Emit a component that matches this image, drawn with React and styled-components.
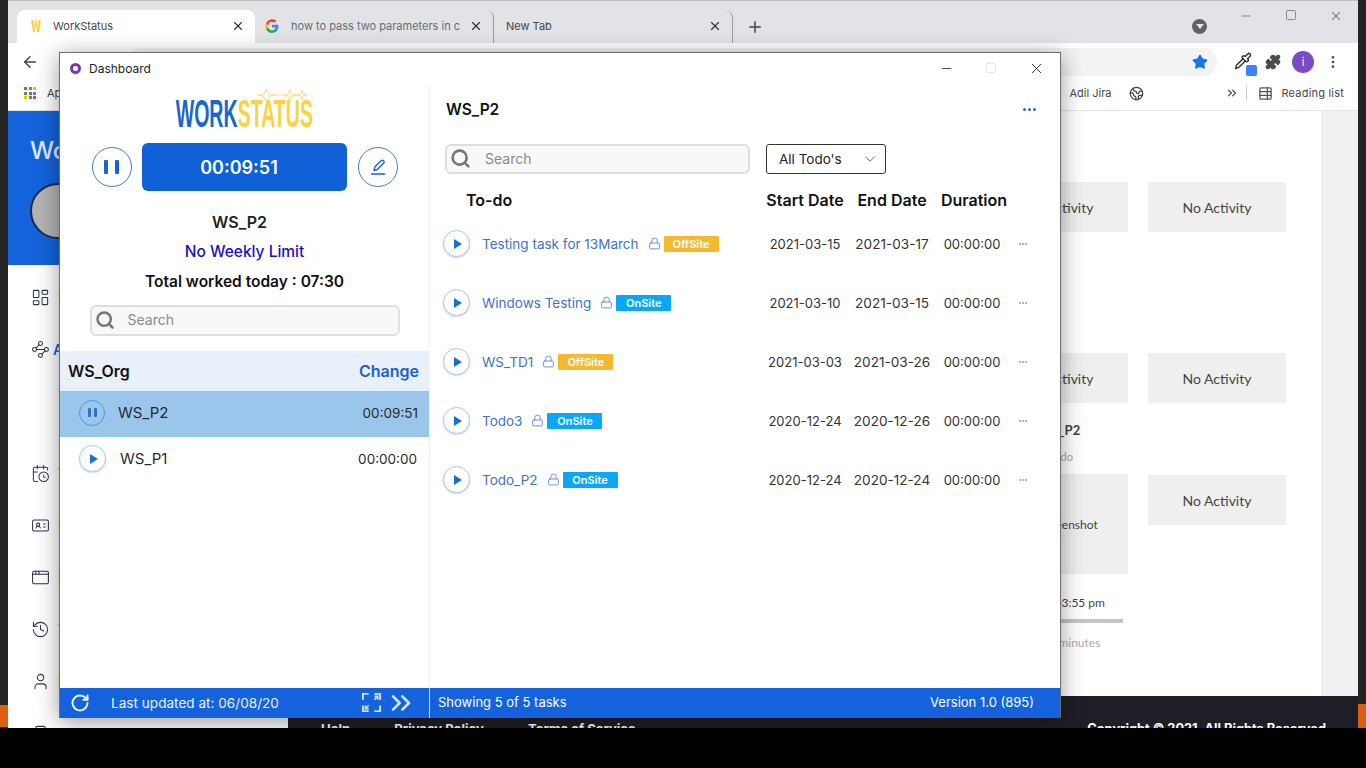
import React from "react";
import styled, { createGlobalStyle } from "styled-components";
import {
  ArrowLeft, AppWindow, Building2, CalendarClock, ChevronDown, ChevronsRight, Earth, History, IdCard,
  LayoutDashboard, Lock, Minus, MoreVertical, Pipette, Plus, Puzzle, RotateCw,
  Search, Square, Star, TableProperties, User, Waypoints, X,
} from "lucide-react";

const Global = createGlobalStyle`
  html, body { margin: 0; padding: 0; background: #000; }
  * { box-sizing: border-box; }
`;

const Screen = styled.div`
  position: relative;
  width: 1366px;
  height: 768px;
  overflow: hidden;
  background: #000;
  font-family: Inter, "Liberation Sans", sans-serif;
`;

const Desktop = styled.div`
  display: flex;
  height: 728px;
`;

const Strip = styled.div`
  width: 8px;
  background: #242424;
  display: flex;
  flex-direction: column;
  justify-content: flex-end;
`;

const OrangeEnd = styled.div`
  height: ${(p) => p.$h}px;
  margin-bottom: ${(p) => p.$mb}px;
  background: #d9600f;
`;

const Browser = styled.div`
  flex: 1;
  display: flex;
  flex-direction: column;
  background: #fff;
  min-width: 0;
`;

const TabStrip = styled.div`
  height: 43px;
  background: #e1e3e6;
  border-top: 1px solid #bdbdbd;
  display: flex;
  align-items: flex-end;
  padding-left: 9px;
  position: relative;
`;

const Tab = styled.div`
  width: ${(p) => p.$w}px;
  height: 33px;
  display: flex;
  align-items: center;
  padding: 0 10px 2px ${(p) => p.$pl}px;
  font-size: 11px;
  color: #45474a;
  background: ${(p) => (p.$active ? "#fff" : "transparent")};
  border-radius: 8px 8px 0 0;
  border-right: ${(p) => (p.$divided ? "1px solid #9a9da1" : "0")};
  background-clip: padding-box;
`;

const TabTitle = styled.span`
  flex: 1;
  white-space: nowrap;
  overflow: hidden;
  margin-left: ${(p) => p.$ml}px;
  color: ${(p) => p.$c || "#45474a"};
`;

const NewTab = styled.div`
  margin-left: 13px;
  height: 33px;
  display: flex;
  align-items: center;
  color: #45474a;
`;

const CaretBadge = styled.div`
  position: absolute;
  left: 1184px;
  top: 18px;
  width: 15px;
  height: 15px;
  border-radius: 50%;
  background: #5f6368;
  display: flex;
  align-items: center;
  justify-content: center;
`;

const CaretTip = styled.div`
  width: 0;
  height: 0;
  border-left: 4px solid transparent;
  border-right: 4px solid transparent;
  border-top: 5px solid #e1e3e6;
`;

const WinControls = styled.div`
  position: absolute;
  right: 15px;
  top: 8px;
  display: flex;
  gap: 32px;
  color: #8a8a8a;
`;

const Toolbar = styled.div`
  height: 37px;
  display: flex;
  align-items: center;
  padding-left: 13px;
  color: #5f6368;
`;

const Omnibox = styled.div`
  margin-left: 88px;
  width: 1090px;
  height: 28px;
  border-radius: 14px;
  background: #f1f3f4;
  display: flex;
  align-items: center;
  justify-content: flex-end;
  padding-right: 9px;
`;

const ToolIcons = styled.div`
  margin-left: 17px;
  display: flex;
  align-items: center;
  gap: 11px;
  color: #4a4d50;
`;

const Eyedropper = styled.div`
  position: relative;
  width: 20px;
  height: 20px;
  color: #333;
`;

const EyedropperChip = styled.div`
  position: absolute;
  right: -3px;
  bottom: -4px;
  width: 11px;
  height: 11px;
  border-radius: 2px;
  background: #3b82f6;
`;

const Avatar = styled.div`
  width: 22px;
  height: 22px;
  border-radius: 50%;
  background: #7b4bc4;
  color: #fff;
  font-size: 11px;
  display: flex;
  align-items: center;
  justify-content: center;
`;

const Bookmarks = styled.div`
  height: 31px;
  display: flex;
  align-items: center;
  padding: 0 0 4px 16px;
  font-size: 11px;
  color: #45474a;
  border-bottom: 1px solid #e4e4e4;
`;

const AppsGrid = styled.div`
  display: grid;
  grid-template-columns: repeat(3, 3px);
  gap: 1.5px;
  margin-right: 11px;
`;

const AppsDot = styled.div`
  width: 3px;
  height: 3px;
  background: ${(p) => p.$c};
`;

const BookmarkRight = styled.div`
  margin-left: auto;
  display: flex;
  align-items: center;
  padding-right: 14px;
`;

const BookmarkLabel = styled.span`
  margin: 0 ${(p) => p.$mr || 0}px 0 ${(p) => p.$ml || 0}px;
  letter-spacing: ${(p) => p.$ls || 0}px;
`;

const OverflowMark = styled.span`
  display: flex;
  margin-left: 81px;
`;

const Divider = styled.div`
  width: 1px;
  height: 16px;
  background: #cfcfcf;
  margin: 0 11px 0 7px;
`;

const SiteBody = styled.div`
  flex: 1;
  display: flex;
  min-height: 0;
`;

const Sidebar = styled.div`
  width: 280px;
  background: #fff;
  overflow: hidden;
`;

const SideHead = styled.div`
  height: 154px;
  background: #1463dc;
  padding: 25px 0 0 22px;
  color: #dfeaff;
  font-size: 24px;
  font-weight: 500;
`;

const Portrait = styled.div`
  width: 56px;
  height: 56px;
  margin-top: 18px;
  border-radius: 50%;
  background: #b4b4b4;
  border: 2px solid #1c2c48;
`;

const Nav = styled.div`
  padding-top: 6px;
`;

const NavItem = styled.div`
  height: 52px;
  display: flex;
  align-items: center;
  padding-left: 23px;
  gap: ${(p) => (p.$on ? 3 : 8)}px;
  font-size: 14px;
  font-weight: ${(p) => (p.$on ? 600 : 400)};
  color: ${(p) => (p.$on ? "#1463dc" : "#333")};
  margin-top: ${(p) => p.$mt || 0}px;
  svg { color: #2d3550; }
`;

const SiteMain = styled.div`
  flex: 1;
  display: flex;
  flex-direction: column;
  min-width: 0;
`;

const SiteTop = styled.div`
  flex: 1;
  display: flex;
  min-height: 0;
`;

const Board = styled.div`
  flex: 1;
  display: flex;
  justify-content: flex-end;
  gap: 20px;
  padding: 71px 36px 0 0;
`;

const BoardCol = styled.div`
  width: 138px;
  display: flex;
  flex-direction: column;
  align-items: center;
`;

const Card = styled.div`
  width: 100%;
  height: ${(p) => p.$h || 50}px;
  margin-top: ${(p) => p.$mt || 0}px;
  background: #efefef;
  display: flex;
  align-items: center;
  justify-content: center;
  font-size: ${(p) => p.$fs || 14}px;
  color: #444;
  font-family: Lato, sans-serif;
`;

const BoardNote = styled.div`
  margin-top: ${(p) => p.$mt}px;
  font-size: ${(p) => p.$fs}px;
  font-weight: ${(p) => p.$fw || 400};
  color: ${(p) => p.$c};
  font-family: Lato, sans-serif;
  white-space: nowrap;
`;

const BoardBar = styled.div`
  width: 133px;
  height: 4px;
  margin-top: 9px;
  align-self: flex-start;
  background: #c4c4c4;
`;

const SiteScroll = styled.div`
  width: 36px;
  background: #f1f1f3;
  border-left: 1px solid #e8e8ea;
`;

const SiteFooter = styled.div`
  height: 32px;
  background: #1f1f27;
  display: flex;
  justify-content: space-between;
  padding: 25px 32px 0 33px;
  font-size: 13px;
  font-weight: 700;
  color: #fff;
  overflow: hidden;
  white-space: nowrap;
`;

const FooterLinks = styled.div`
  display: flex;
  gap: 19px;
`;

const Copyright = styled.span`
  font-size: 12.8px;
`;

const Window = styled.div`
  position: absolute;
  left: 59px;
  top: 52px;
  width: 1002px;
  height: 666px;
  display: flex;
  flex-direction: column;
  background: #fff;
  border: 1px solid #6e6e6e;
  border-bottom: 0;
  box-shadow: 0 4px 22px rgba(0, 0, 0, 0.4);
`;

const TitleBar = styled.div`
  height: 32px;
  flex: none;
  display: flex;
  align-items: center;
  padding: 0 0 2px 10px;
  font-size: 12px;
  color: #222;
`;

const TitleGlyph = styled.div`
  width: 11px;
  height: 11px;
  margin-right: 8px;
  border-radius: 50%;
  border: 3px solid #7a3aa8;
`;

const TitleButtons = styled.div`
  margin-left: auto;
  display: flex;
  align-items: center;
  padding-right: 15px;
  gap: 31px;
  color: #222;
`;

const Panes = styled.div`
  flex: 1;
  display: flex;
  min-height: 0;
`;

const LeftPane = styled.div`
  width: 370px;
  flex: none;
  border-right: 1px solid #f3f3f3;
  display: flex;
  flex-direction: column;
  align-items: center;
`;

const LogoBox = styled.div`
  position: relative;
  height: 58px;
  width: 100%;
  display: flex;
  justify-content: center;
  padding-top: 10px;
`;

const LogoText = styled.div`
  font-family: "Liberation Sans Narrow", "Liberation Sans", sans-serif;
  font-weight: 700;
  font-size: 38px;
  line-height: 38px;
  white-space: nowrap;
  transform: scaleX(0.515);
  color: #1a66cc;
`;

const LogoGold = styled.span`
  color: #fbd23f;
`;

const LogoStars = styled.svg`
  position: absolute;
  left: 194px;
  top: 2px;
`;

const TimerRow = styled.div`
  display: flex;
  align-items: center;
  height: 48px;
  gap: 10px;
`;

const RoundButton = styled.div`
  width: 40px;
  height: 40px;
  margin-left: ${(p) => p.$ml || 0}px;
  border-radius: 50%;
  border: 1px solid #3f7fd0;
  color: #1463dc;
  display: flex;
  align-items: center;
  justify-content: center;
  gap: 7px;
`;

const PauseBar = styled.div`
  width: ${(p) => p.$w}px;
  height: ${(p) => p.$h}px;
  border-radius: 1px;
  background: ${(p) => p.$c || "#1463dc"};
`;

const TimerButton = styled.div`
  width: 205px;
  height: 48px;
  padding-right: 10px;
  border-radius: 6px;
  background: #1061d8;
  color: #fff;
  font-size: 18px;
  font-weight: 600;
  display: flex;
  align-items: center;
  justify-content: center;
`;

const InfoLine = styled.div`
  height: ${(p) => p.$h || 30}px;
  line-height: ${(p) => p.$h || 30}px;
  margin-top: ${(p) => p.$mt || 0}px;
  padding-right: ${(p) => p.$pr || 0}px;
  font-size: ${(p) => p.$fs || 15.5}px;
  font-weight: ${(p) => p.$fw};
  color: ${(p) => p.$c};
`;

const SearchBox = styled.div`
  width: ${(p) => p.$w}px;
  height: ${(p) => p.$h}px;
  margin-top: ${(p) => p.$mt || 0}px;
  border: 2px solid #dedede;
  border-radius: 6px;
  background: #f8f8f8;
  display: flex;
  align-items: center;
  padding: 0 0 2px 3px;
  gap: ${(p) => p.$gap || 13}px;
  font-size: 14px;
  color: #8a8a8a;
  svg { color: #777; }
`;

const OrgHead = styled.div`
  width: 100%;
  height: 40px;
  margin-top: 15px;
  background: #e8f0fc;
  display: flex;
  align-items: center;
  justify-content: space-between;
  padding: 0 10px 0 8px;
  font-size: 16px;
  font-weight: 600;
  color: #111;
`;

const ChangeLink = styled.span`
  color: #1a62c8;
  font-size: 16px;
`;

const ProjectRow = styled.div`
  width: 100%;
  height: ${(p) => (p.$active ? 46 : 45)}px;
  background: ${(p) => (p.$active ? "#9bc6ec" : "#fff")};
  display: flex;
  align-items: center;
  padding: 0 ${(p) => (p.$active ? 11 : 12)}px ${(p) => (p.$active ? 3 : 2)}px 19px;
  gap: ${(p) => (p.$active ? 13 : 14)}px;
  font-size: 15px;
  color: #2a2a2a;
`;

const ProjectTime = styled.span`
  margin-left: auto;
  font-size: 13.5px;
`;

const MiniRound = styled.div`
  width: ${(p) => p.$d}px;
  height: ${(p) => p.$d}px;
  flex: none;
  border-radius: 50%;
  border: 1px solid ${(p) => (p.$paused ? "#5a94cf" : "#a9c8ea")};
  background: ${(p) => (p.$paused ? "transparent" : "#fff")};
  box-shadow: ${(p) => (p.$paused ? "none" : "0 1px 2px rgba(90,120,170,.3)")};
  display: flex;
  align-items: center;
  justify-content: center;
  gap: 3px;
`;

const PlayTip = styled.div`
  width: 0;
  height: 0;
  margin-left: 2px;
  border-top: 5px solid transparent;
  border-bottom: 5px solid transparent;
  border-left: 8px solid #1a70d2;
`;

const RightPane = styled.div`
  flex: 1;
  display: flex;
  flex-direction: column;
  padding-left: 13px;
  min-width: 0;
`;

const PaneHead = styled.div`
  height: 48px;
  display: flex;
  align-items: center;
  justify-content: space-between;
  padding: 0 24px 0 3px;
  font-size: 15.5px;
  font-weight: 600;
  color: #111;
`;

const Dots = styled.div`
  display: flex;
  gap: 2px;
`;

const Dot = styled.div`
  width: ${(p) => p.$s}px;
  height: ${(p) => p.$s}px;
  border-radius: 50%;
  background: ${(p) => p.$c};
`;

const FilterRow = styled.div`
  margin: 11px 0 0 2px;
  display: flex;
  gap: 16px;
`;

const FilterSelect = styled.div`
  width: 120px;
  height: 30px;
  border: 1px solid #333;
  border-radius: 3px;
  display: flex;
  align-items: center;
  justify-content: space-between;
  padding: 0 6px 1px 12px;
  font-size: 13.5px;
  color: #222;
  svg { color: #555; }
`;

const tableCols = "319px 86px 88px 72px 30px";

const TableHead = styled.div`
  margin-top: 11px;
  height: 29px;
  display: grid;
  grid-template-columns: ${tableCols};
  align-items: center;
  font-size: 16px;
  font-weight: 600;
  color: #111;
`;

const HeadCell = styled.div`
  padding-left: ${(p) => p.$pl || 0}px;
  text-align: center;
  white-space: nowrap;
`;

const HeadTodo = styled.div`
  padding-left: 23px;
`;

const TaskRow = styled.div`
  height: 59px;
  display: grid;
  grid-template-columns: ${tableCols};
  align-items: center;
  font-size: 13px;
  color: #333;
`;

const TaskMain = styled.div`
  display: flex;
  align-items: center;
`;

const TaskName = styled.span`
  margin-left: 12px;
  margin-right: 9px;
  color: #3d74c4;
  font-size: 13.5px;
  white-space: nowrap;
`;

const LockWrap = styled.span`
  display: flex;
  color: #6c8fdc;
  margin-right: 3px;
`;

const Badge = styled.span`
  width: 55px;
  height: 16px;
  border-radius: 1px;
  background: ${(p) => (p.$kind === "OffSite" ? "#f5b92f" : "#0ba6f6")};
  color: #fff;
  font-size: 11px;
  font-weight: 600;
  display: flex;
  align-items: center;
  justify-content: center;
`;

const TaskCell = styled.div`
  text-align: center;
  white-space: nowrap;
  font-size: ${(p) => p.$fs || 13}px;
`;

const TaskDots = styled.div`
  display: flex;
  justify-content: center;
  gap: 1px;
`;

const StatusBar = styled.div`
  height: 30px;
  flex: none;
  display: flex;
  background: #1463dc;
  color: #fff;
`;

const StatusLeft = styled.div`
  width: 370px;
  flex: none;
  border-right: 1px solid #d8e6fa;
  display: flex;
  align-items: center;
  padding: 0 0 1px 10px;
  font-size: 13.6px;
  color: #eaf2ff;
`;

const StatusText = styled.span`
  margin-left: 21px;
`;

const StatusIcons = styled.div`
  margin-left: auto;
  display: flex;
  align-items: center;
  gap: 2px;
  padding-right: 12px;
  color: #cfe2ff;
`;

const StatusRight = styled.div`
  flex: 1;
  display: flex;
  align-items: center;
  justify-content: space-between;
  padding: 0 26px 2px 8px;
  font-size: 13px;
`;

const appColors = ["#ea4335", "#4285f4", "#fbbc05", "#34a853", "#ea4335", "#4285f4", "#fbbc05", "#34a853", "#ea4335"];

const tasks = [
  { name: "Testing task for 13March", kind: "OffSite", start: "2021-03-15", end: "2021-03-17" },
  { name: "Windows Testing", kind: "OnSite", start: "2021-03-10", end: "2021-03-15" },
  { name: "WS_TD1", kind: "OffSite", start: "2021-03-03", end: "2021-03-26" },
  { name: "Todo3", kind: "OnSite", start: "2020-12-24", end: "2020-12-26" },
  { name: "Todo_P2", kind: "OnSite", start: "2020-12-24", end: "2020-12-24" },
];

const navItems = [
  { Icon: LayoutDashboard, label: "Dashboard" },
  { Icon: Waypoints, label: "Activity", on: true },
  { Icon: CalendarClock, label: "Timesheet", mt: 72 },
  { Icon: IdCard, label: "Reports" },
  { Icon: AppWindow, label: "Projects" },
  { Icon: History, label: "Time" },
  { Icon: User, label: "Members" },
  { Icon: Building2, label: "Organization" },
];

const GoogleMark = () => (
  <svg width="14" height="14" viewBox="0 0 24 24">
    <path fill="#4285f4" d="M23 12.3c0-.8-.1-1.600-.2-2.300H12v4.400h6.200a5.300 5.300 0 0 1-2.300 3.500v2.900h3.700c2.200-2 3.400-5 3.400-8.500z" />
    <path fill="#34a853" d="M12 24c3.100 0 5.700-1 7.600-2.800l-3.700-2.900c-1 .7-2.300 1.100-3.900 1.100-3 0-5.500-2-6.400-4.700H1.800v3A12 12 0 0 0 12 24z" />
    <path fill="#fbbc05" d="M5.600 14.700a7 7 0 0 1 0-4.500v-3H1.800a12 12 0 0 0 0 10.500z" />
    <path fill="#ea4335" d="M12 4.800c1.700 0 3.200.6 4.400 1.700l3.300-3.300A11.500 11.500 0 0 0 1.800 7.200l3.800 3C6.500 6.800 9 4.800 12 4.800z" />
  </svg>
);

const WMark = () => (
  <svg width="10" height="14" viewBox="0 0 10 14">
    <path d="M0 1h2.500l1 9 1-9h1l1 9 1-9H10L8 13H6L5 6l-1 7H2z" fill="#fbd23f" />
  </svg>
);

const EditGlyph = () => (
  <svg width="20" height="20" viewBox="0 0 20 20" fill="none" stroke="currentColor" strokeWidth="1.4" strokeLinejoin="round">
    <path d="M6 13.500l.8-3.500 6.500-6.500a1.300 1.300 0 0 1 1.900 0l.6.600a1.300 1.300 0 0 1 0 1.900L9.300 12.500z" />
    <path d="M3.500 17h13" strokeLinecap="round" strokeWidth="1.600" />
  </svg>
);

const ExpandGlyph = () => (
  <svg width="23" height="23" viewBox="0 0 24 24" fill="none" stroke="currentColor" strokeWidth="2">
    <path d="M3 9V3h6M15 3h6v6M21 15v6h-6M9 21H3v-6" />
    <path d="M15 9l3.500-3.500M15 5.500h3.500V9M9 15l-3.500 3.500M9 18.500H5.500V15" strokeWidth="1.600" />
  </svg>
);

const Play = () => (
  <MiniRound $d={27}>
    <PlayTip />
  </MiniRound>
);

export default function App() {
  return (
    <Screen>
      <Global />
      <Desktop>
        <Strip>
          <OrangeEnd $h={22} $mb={1} />
        </Strip>
        <Browser>
          <TabStrip>
            <Tab $w={238} $pl={14} $active>
              <WMark />
              <TabTitle $ml={12}>WorkStatus</TabTitle>
              <X size={14} color="#333" />
            </Tab>
            <Tab $w={239} $pl={10} $divided>
              <GoogleMark />
              <TabTitle $ml={12} $c="#6a6d70">how to pass two parameters in c</TabTitle>
              <X size={14} color="#333" />
            </Tab>
            <Tab $w={239} $pl={12} $divided>
              <TabTitle $ml={0}>New Tab</TabTitle>
              <X size={14} color="#333" />
            </Tab>
            <NewTab>
              <Plus size={18} />
            </NewTab>
            <CaretBadge>
              <CaretTip />
            </CaretBadge>
            <WinControls>
              <Minus size={14} />
              <Square size={12} />
              <X size={14} />
            </WinControls>
          </TabStrip>
          <Toolbar>
            <ArrowLeft size={18} color="#444" />
            <Omnibox>
              <Star size={16} fill="#1a73e8" color="#1a73e8" />
            </Omnibox>
            <ToolIcons>
              <Eyedropper>
                <Pipette size={18} />
                <EyedropperChip />
              </Eyedropper>
              <Puzzle size={16} fill="#4a4d50" />
              <Avatar>i</Avatar>
              <MoreVertical size={16} />
            </ToolIcons>
          </Toolbar>
          <Bookmarks>
            <AppsGrid>
              {appColors.map((c, i) => (
                <AppsDot key={i} $c={c} />
              ))}
            </AppsGrid>
            <span>Apps</span>
            <BookmarkRight>
              <BookmarkLabel $mr={17}>Adil Jira</BookmarkLabel>
              <Earth size={15} color="#444" />
              <OverflowMark>
                <ChevronsRight size={14} color="#444" />
              </OverflowMark>
              <Divider />
              <TableProperties size={15} color="#555" />
              <BookmarkLabel $ml={9} $ls={0.2}>Reading list</BookmarkLabel>
            </BookmarkRight>
          </Bookmarks>
          <SiteBody>
            <Sidebar>
              <SideHead>
                WorkStatus
                <Portrait />
              </SideHead>
              <Nav>
                {navItems.map(({ Icon, label, on, mt }) => (
                  <NavItem key={label} $on={on} $mt={mt}>
                    <Icon size={19} strokeWidth={1.3} />
                    {label}
                  </NavItem>
                ))}
              </Nav>
            </Sidebar>
            <SiteMain>
              <SiteTop>
                <Board>
                  <BoardCol>
                    <Card>No Activity</Card>
                    <Card $mt={121}>No Activity</Card>
                    <BoardNote $mt={19} $fs={13} $fw={700} $c="#444">WS_P2</BoardNote>
                    <BoardNote $mt={12} $fs={11} $c="#aaa">To-do</BoardNote>
                    <Card $mt={11} $h={100} $fs={12}>No Screenshot</Card>
                    <BoardNote $mt={21} $fs={12} $c="#444">03:45 - 03:55 pm</BoardNote>
                    <BoardBar />
                    <BoardNote $mt={12} $fs={12} $c="#aaa">0 of 10 minutes</BoardNote>
                  </BoardCol>
                  <BoardCol>
                    <Card>No Activity</Card>
                    <Card $mt={121}>No Activity</Card>
                    <Card $mt={72}>No Activity</Card>
                  </BoardCol>
                </Board>
                <SiteScroll />
              </SiteTop>
              <SiteFooter>
                <FooterLinks>
                  <span>Help</span>
                  <span>•</span>
                  <span>Privacy Policy</span>
                  <span>•</span>
                  <span>Terms of Service</span>
                </FooterLinks>
                <Copyright>Copyright © 2021. All Rights Reserved</Copyright>
              </SiteFooter>
            </SiteMain>
          </SiteBody>
        </Browser>
        <Strip>
          <OrangeEnd $h={24} $mb={0} />
        </Strip>
      </Desktop>

      <Window>
        <TitleBar>
          <TitleGlyph />
          Dashboard
          <TitleButtons>
            <Minus size={15} strokeWidth={1.3} />
            <Square size={12} strokeWidth={1} color="#ccc" />
            <X size={17} strokeWidth={1.3} />
          </TitleButtons>
        </TitleBar>
        <Panes>
          <LeftPane>
            <LogoBox>
              <LogoText>
                WORK<LogoGold>STATUS</LogoGold>
              </LogoText>
              <LogoStars width="56" height="16" viewBox="0 0 56 16" fill="none" stroke="#fbd98a" strokeWidth="1">
                <path d="M12 2l2.500 5.500L20 8l-5.500 1.500L12 14l-2.500-4.500L4 8l5.500-.5zM36 2l1.500 5 5 1-5 1.500L36 14l-1.500-4.500-5-1.500 5-1zM48 3l1 4 4 1-4 1-1 4-1-4-4-1 4-1zM20 8h9M42 8h2" />
              </LogoStars>
            </LogoBox>
            <TimerRow>
              <RoundButton>
                <PauseBar $w={4} $h={14} />
                <PauseBar $w={4} $h={14} />
              </RoundButton>
              <TimerButton>00:09:51</TimerButton>
              <RoundButton $ml={1}>
                <EditGlyph />
              </RoundButton>
            </TimerRow>
            <InfoLine $mt={16} $fs={16} $fw={600} $c="#222" $pr={10}>WS_P2</InfoLine>
            <InfoLine $fw={500} $c="#1a10c8">No Weekly Limit</InfoLine>
            <InfoLine $h={29} $fw={600} $c="#111">Total worked today : 07:30</InfoLine>
            <SearchBox $w={310} $h={31} $mt={9}>
              <Search size={20} strokeWidth={3} />
              Search
            </SearchBox>
            <OrgHead>
              WS_Org
              <ChangeLink>Change</ChangeLink>
            </OrgHead>
            <ProjectRow $active>
              <MiniRound $d={26} $paused>
                <PauseBar $w={3} $h={9} $c="#2f72c0" />
                <PauseBar $w={3} $h={9} $c="#2f72c0" />
              </MiniRound>
              WS_P2
              <ProjectTime>00:09:51</ProjectTime>
            </ProjectRow>
            <ProjectRow>
              <Play />
              WS_P1
              <ProjectTime>00:00:00</ProjectTime>
            </ProjectRow>
          </LeftPane>
          <RightPane>
            <PaneHead>
              WS_P2
              <Dots>
                <Dot $s={3} $c="#2f6bc4" />
                <Dot $s={3} $c="#2f6bc4" />
                <Dot $s={3} $c="#2f6bc4" />
              </Dots>
            </PaneHead>
            <FilterRow>
              <SearchBox $w={305} $h={30} $gap={14}>
                <Search size={21} strokeWidth={3} />
                Search
              </SearchBox>
              <FilterSelect>
                All Todo's
                <ChevronDown size={18} strokeWidth={1.2} />
              </FilterSelect>
            </FilterRow>
            <TableHead>
              <HeadTodo>To-do</HeadTodo>
              <HeadCell>Start Date</HeadCell>
              <HeadCell>End Date</HeadCell>
              <HeadCell $pl={4}>Duration</HeadCell>
            </TableHead>
            {tasks.map((t) => (
              <TaskRow key={t.name}>
                <TaskMain>
                  <Play />
                  <TaskName>{t.name}</TaskName>
                  <LockWrap>
                    <Lock size={13} strokeWidth={1.8} />
                  </LockWrap>
                  <Badge $kind={t.kind}>{t.kind}</Badge>
                </TaskMain>
                <TaskCell>{t.start}</TaskCell>
                <TaskCell $fs={13.6}>{t.end}</TaskCell>
                <TaskCell>00:00:00</TaskCell>
                <TaskDots>
                  <Dot $s={2} $c="#9a9a9a" />
                  <Dot $s={2} $c="#9a9a9a" />
                  <Dot $s={2} $c="#9a9a9a" />
                </TaskDots>
              </TaskRow>
            ))}
          </RightPane>
        </Panes>
        <StatusBar>
          <StatusLeft>
            <RotateCw size={20} strokeWidth={2.4} />
            <StatusText>Last updated at: 06/08/20</StatusText>
            <StatusIcons>
              <ExpandGlyph />
              <ChevronsRight size={32} strokeWidth={2} />
            </StatusIcons>
          </StatusLeft>
          <StatusRight>
            <span>Showing 5 of 5 tasks</span>
            <span>Version 1.0 (895)</span>
          </StatusRight>
        </StatusBar>
      </Window>
    </Screen>
  );
}
